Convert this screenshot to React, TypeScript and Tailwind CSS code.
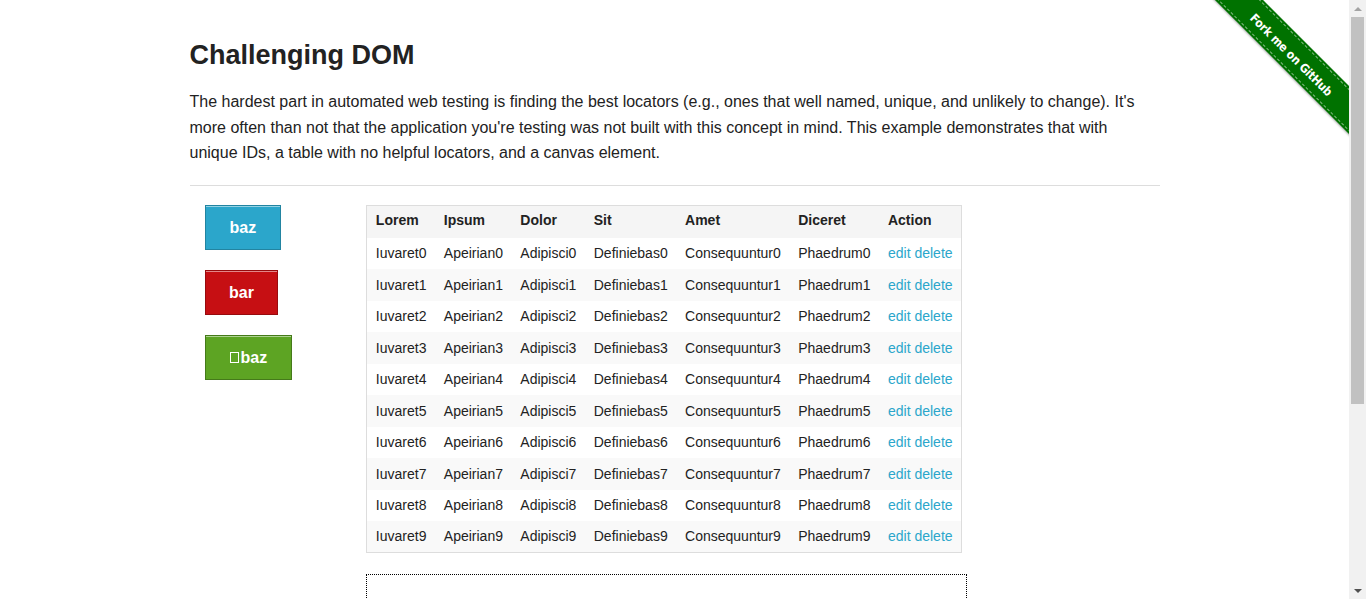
import React from 'react'

const columns = ['Lorem', 'Ipsum', 'Dolor', 'Sit', 'Amet', 'Diceret', 'Action']

const rows = Array.from({ length: 10 }, (_, i) => [
  `Iuvaret${i}`,
  `Apeirian${i}`,
  `Adipisci${i}`,
  `Definiebas${i}`,
  `Consequuntur${i}`,
  `Phaedrum${i}`,
])

const btnBase =
  'inline-block border font-bold text-[16px] leading-[21px] text-white py-[11px] shadow-[inset_0_1px_0_rgba(255,255,255,0.5)]'

const App = () => {
  return (
    <div className="flex h-[599px] overflow-hidden bg-white text-[#222] font-['Liberation_Sans',Arial,sans-serif]">
      <div className="relative flex-1">
        {/* Fork ribbon */}
        <div className="absolute top-0 right-0 w-[149px] h-[149px] overflow-hidden">
          <div className="absolute left-[-16px] top-[38px] w-[220px] h-[34px] rotate-45 bg-[#007200] flex items-center justify-center shadow-[0_1px_2px_rgba(0,0,0,0.3)]">
            <div className="absolute inset-x-0 top-[2px] border-t border-dashed border-white/50" />
            <div className="absolute inset-x-0 bottom-[2px] border-b border-dashed border-white/50" />
            <span className="text-white font-bold text-[12px] tracking-[-0.2px] font-['DejaVu_Sans_Condensed','Liberation_Sans',sans-serif] -translate-x-[2px] translate-y-[2px]">
              Fork me on GitHub
            </span>
          </div>
        </div>

        <div className="w-[970px] mx-auto pt-[38px]">
          <h3 className="text-[27px] font-bold leading-[34px] text-[#222]">Challenging DOM</h3>
          <p className="mt-[17px] text-[16px] leading-[25.6px] text-[#222]">
            The hardest part in automated web testing is finding the best locators (e.g., ones that well named, unique, and unlikely to change). It's more often than not that the application you're testing was not built with this concept in mind. This example demonstrates that with unique IDs, a table with no helpful locators, and a canvas element.
          </p>
          <hr className="mt-[19px] border-0 border-t border-[#ddd]" />

          <div className="flex mt-[19px]">
            <div className="w-[161.67px] px-[15px] flex flex-col items-start gap-[20px]">
              <a className={`${btnBase} px-[24px] bg-[#2ba6cb] border-[#2284a1]`}>baz</a>
              <a className={`${btnBase} px-[23.5px] bg-[#c60f13] border-[#970b0e]`}>bar</a>
              <a className={`${btnBase} px-[24px] bg-[#5da423] border-[#457a1a] flex items-center`}>
                <span className="inline-block w-[9px] h-[11px] border border-white mr-[2px]" />
                baz
              </a>
            </div>

            <div className="w-[808.33px] px-[15px]">
              <table className="border border-[#ddd] border-collapse text-[14px] text-[#222]">
                <thead>
                  <tr className="bg-[#f5f5f5] h-[32px]">
                    {columns.map((c) => (
                      <th key={c} className="px-[8.7px] pt-[6px] pb-[10px] text-left font-bold leading-[16px]">
                        {c}
                      </th>
                    ))}
                  </tr>
                </thead>
                <tbody>
                  {rows.map((r, i) => (
                    <tr key={i} className={`h-[31.5px] ${i % 2 === 1 ? 'bg-[#f9f9f9]' : 'bg-white'}`}>
                      {r.map((cell) => (
                        <td key={cell} className="px-[8.7px]">
                          {cell}
                        </td>
                      ))}
                      <td className="px-[8.7px]">
                        <a className="text-[#2ba6cb]">edit</a> <a className="text-[#2ba6cb]">delete</a>
                      </td>
                    </tr>
                  ))}
                </tbody>
              </table>

              <div className="mt-[21px] w-[601px] h-[202px] border border-dotted border-black" />
            </div>
          </div>
        </div>
      </div>

      {/* Scrollbar */}
      <div className="w-[17px] h-[599px] bg-[#f1f1f1] flex flex-col items-center">
        <div className="h-[17px] flex items-center justify-center">
          <div className="w-0 h-0 border-x-[4px] border-x-transparent border-b-[4px] border-b-[#a3a3a3]" />
        </div>
        <div className="w-[13px] h-[387px] bg-[#c1c1c1]" />
        <div className="flex-1" />
        <div className="h-[17px] flex items-center justify-center">
          <div className="w-0 h-0 border-x-[4px] border-x-transparent border-t-[4px] border-t-[#505050]" />
        </div>
      </div>
    </div>
  )
}

export default App
